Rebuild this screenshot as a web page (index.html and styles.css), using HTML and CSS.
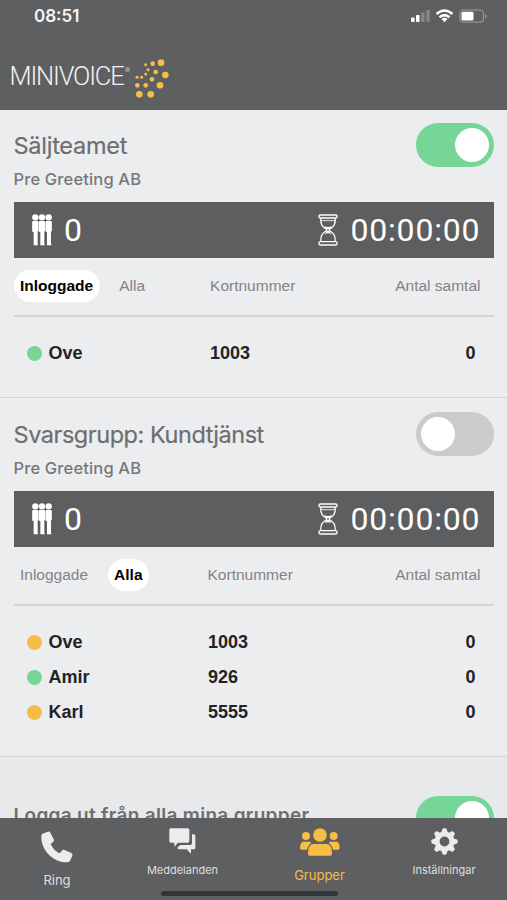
FILE: index.html
```html
<!DOCTYPE html>
<html lang="sv">
<head>
<meta charset="utf-8">
<title>Minivoice – Grupper</title>
<link rel="stylesheet" href="styles.css">
</head>
<body>
<svg width="0" height="0" class="defs">
  <symbol id="people" viewBox="0 0 60 96">
    <g id="person"><circle cx="10" cy="10" r="9.500"/><path d="M3 21H17Q19.500 21 19.500 24V52H17V90L19 94H5V54H3Q.5 54 .5 51V24Q.5 21 3 21Z"/></g>
    <use href="#person" x="20"/>
    <use href="#person" x="40"/>
  </symbol>
  <symbol id="glass" viewBox="0 0 60 96">
    <g fill="none" stroke="#fff" stroke-width="4">
      <rect x="3" y="3" width="54" height="9" rx="4"/><rect x="3" y="83" width="54" height="10" rx="4"/>
      <path d="M8 13C8 33 13 38 24 45Q28 48 24 51C13 58 8 64 8 82M52 13C52 33 47 38 36 45Q32 48 36 51C47 58 52 64 52 82"/>
      <path d="M9 20H51" stroke-width="2.500"/>
    </g>
    <path d="M18 36Q30 42 42 36L35 46H25ZM26 50H34L40 60Q30 55 20 60Z" fill="#fff"/>
  </symbol>
</svg>
<div class="phone">
  <header class="header">
    <div class="status">
      <span class="clock">08:51</span>
      <svg class="indicators" viewBox="0 0 78 18" width="78" height="18">
        <g fill="#fff"><rect x="1" y="11.500" width="3.600" height="4.500" rx="1"/><rect x="6" y="9" width="3.600" height="7" rx="1"/></g>
        <g fill="#858688"><rect x="11.200" y="6.500" width="3.400" height="9.500" rx="1"/><rect x="16.300" y="4" width="3.400" height="12" rx="1"/></g>
        <g fill="none" stroke="#fff" stroke-width="2.500"><path d="M26.500 8Q34.500 1 42.500 8M29.500 11.300Q34.500 7 39.500 11.300"/></g>
        <path d="M31.500 13Q34.500 10.500 37.500 13L34.500 16.300Z" fill="#fff"/>
        <rect x="50" y="4.200" width="23.500" height="12" rx="3.500" fill="none" stroke="#929395" stroke-width="1.300"/>
        <rect x="51.500" y="5.800" width="12" height="8.800" rx="1.500" fill="#fff"/>
        <path d="M75 8Q78.500 10.200 75 12.500Z" fill="#929395"/>
      </svg>
    </div>
    <div class="brand">
      <span class="wordmark">MINIVOICE</span><i class="reg"></i>
      <svg class="dots" viewBox="400 170 120 130" width="40" height="43.330" fill="#f7bd45">
        <circle cx="438" cy="193" r="4.500"/><circle cx="459" cy="190" r="7"/><circle cx="484" cy="187" r="10"/>
        <circle cx="445" cy="208" r="4.500"/><circle cx="468" cy="215" r="7"/><circle cx="497" cy="224" r="10"/>
        <circle cx="438" cy="221" r="4.500"/><circle cx="412" cy="231" r="4.500"/><circle cx="426" cy="231" r="4.500"/>
        <circle cx="457" cy="237" r="7"/><circle cx="413" cy="255" r="7"/><circle cx="438" cy="255" r="7"/>
        <circle cx="481" cy="255" r="10"/><circle cx="419" cy="282" r="10"/><circle cx="453" cy="282" r="10"/>
      </svg>
    </div>
  </header>

  <main class="content">
    <section class="group">
      <div class="top">
        <div><h2 class="t1">Säljteamet</h2><p class="company">Pre Greeting AB</p></div>
        <span class="toggle on"></span>
      </div>
      <div class="bar">
        <svg class="people" width="20" height="32" fill="#fff"><use href="#people"/></svg><span class="count">0</span>
        <svg class="glass" width="20" height="32"><use href="#glass"/></svg><span class="time">00:00:00</span>
      </div>
      <div class="filters">
        <span class="pill active">Inloggade</span><span class="pill all">Alla</span>
        <span class="col">Kortnummer</span><span class="calls">Antal samtal</span>
      </div>
      <div class="rows">
        <div class="row"><i class="dot green"></i><b class="name">Ove</b><b class="num">1003</b><b>0</b></div>
      </div>
    </section>

    <section class="group second">
      <div class="top">
        <div><h2 class="t2">Svarsgrupp: Kundtjänst</h2><p class="company">Pre Greeting AB</p></div>
        <span class="toggle"></span>
      </div>
      <div class="bar">
        <svg class="people" width="20" height="32" fill="#fff"><use href="#people"/></svg><span class="count">0</span>
        <svg class="glass" width="20" height="32"><use href="#glass"/></svg><span class="time">00:00:00</span>
      </div>
      <div class="filters">
        <span class="pill">Inloggade</span><span class="pill all active">Alla</span>
        <span class="col">Kortnummer</span><span class="calls">Antal samtal</span>
      </div>
      <div class="rows">
        <div class="row"><i class="dot"></i><b class="name">Ove</b><b class="num">1003</b><b>0</b></div>
        <div class="row"><i class="dot green"></i><b class="name">Amir</b><b class="num">926</b><b>0</b></div>
        <div class="row"><i class="dot"></i><b class="name">Karl</b><b class="num">5555</b><b>0</b></div>
      </div>
    </section>

    <section class="logout">
      <span class="logout-text">Logga ut från alla mina grupper</span>
      <span class="toggle on"></span>
    </section>
  </main>

  <nav class="tabs">
    <div class="tab ring">
      <svg width="32" height="32" viewBox="0 0 96 96" fill="#ebecee"><path d="M5 8L20 2Q25 0 28 5L38 25Q40 29 37 32L29 39Q38 59 56 67L64 58Q67 55 71 57L91 66Q96 69 94 74L88 88Q86 94 79 94C36 94 1 59 1 17Q0 10 5 8Z"/></svg>
      <span>Ring</span>
    </div>
    <div class="tab messages">
      <svg width="27" height="26" viewBox="0 0 81 78" fill="#ebecee"><path d="M5 1H56Q61 1 61 6V39Q61 44 56 44H27L16 56V44H5Q1 44 1 39V6Q1 1 5 1Z"/><path d="M69 19H75Q79 19 79 24V60Q79 64 75 64H66V77L53 64H30Q26 64 26 60V58L34 51H64Q69 51 69 46Z"/></svg>
      <span>Meddelanden</span>
    </div>
    <div class="tab groups">
      <svg width="40" height="28" viewBox="0 0 120 84" fill="#f7bd45"><circle cx="60" cy="21" r="20.500"/><circle cx="18" cy="24" r="12"/><circle cx="101" cy="24" r="12"/><path d="M41 48H79C91 48 96 60 96 77Q96 83 90 83H30Q24 83 24 77C24 60 29 48 41 48Z"/><path d="M12 41H27Q32 41 34 45Q24 51 21 65H5Q0 65 0 60C0 49 4 41 12 41ZM108 41H92Q88 41 86 45Q96 51 99 65H114Q119 65 119 60C119 49 116 41 108 41Z"/></svg>
      <span>Grupper</span>
    </div>
    <div class="tab settings">
      <svg width="27" height="27" viewBox="-40 -40 80 80" fill="#ebecee"><circle r="22" fill="none" stroke="#ebecee" stroke-width="15"/><path id="tooth" d="M-10-25L-6-37Q-5-39-3-39H3Q5-39 6-37L10-25Z"/><use href="#tooth" transform="rotate(45)"/><use href="#tooth" transform="rotate(90)"/><use href="#tooth" transform="rotate(135)"/><use href="#tooth" transform="rotate(180)"/><use href="#tooth" transform="rotate(225)"/><use href="#tooth" transform="rotate(270)"/><use href="#tooth" transform="rotate(315)"/></svg>
      <span>Inställningar</span>
    </div>
    <i class="home"></i>
  </nav>
</div>
</body>
</html>
```
FILE: styles.css
```css
* { box-sizing: border-box; }
body { margin: 0; font-family: Inter, "Liberation Sans", sans-serif; color: #6d6e71; }
h2, p { margin: 0; font-weight: 400; }
i { display: block; flex: none; }
svg { display: block; flex: none; }
.defs { position: absolute; }
.phone { width: 507px; height: 900px; display: flex; flex-direction: column; overflow: hidden; background: #ecedef; }

.header { height: 110px; flex: none; background: #5e5f61; }
.status { height: 32px; display: flex; justify-content: space-between; padding: 6px 18px 0 34px; color: #f6f6f6; }
.clock { font-size: 17px; font-weight: 600; line-height: 21px; }
.indicators { margin-right: 1px; }
.brand { display: flex; padding-left: 9.500px; height: 78px; }
.wordmark { width: 115.500px; margin-top: 29px; font-family: Roboto, sans-serif; font-weight: 300; font-size: 25.500px; line-height: 30px; letter-spacing: -1.150px; color: #f2f2f2; white-space: nowrap; }
.reg { width: 5px; height: 5px; margin-top: 35px; border-radius: 50%; background: #929395; }
.dots { margin: 24.700px 0 0 3.300px; }

.content { height: 708px; flex: none; overflow: hidden; }
.group { height: 288px; padding: 12.500px 13.500px 0; border-bottom: 1px solid #d3d4d6; }
.group.second { height: 359px; padding-top: 13.500px; }
.top { display: flex; justify-content: space-between; height: 79px; }
h2 { font-size: 23.500px; font-weight: 400; line-height: 30px; margin-top: 8px; white-space: nowrap; -webkit-text-stroke: .2px currentColor; }
.t1 { letter-spacing: -.250px; }
.t2 { letter-spacing: -.450px; }
.company { font-size: 16.500px; font-weight: 500; line-height: 22px; margin-top: 7px; letter-spacing: .150px; color: #77787b; }
.toggle { flex: none; width: 78px; height: 44px; padding: 5px; border-radius: 22px; background: #cacbcb; }
.toggle::before { content: ""; display: block; width: 34px; height: 34px; border-radius: 50%; background: #fff; }
.toggle.on { background: #75d697; }
.toggle.on::before { margin-left: 34px; }
.bar { height: 56px; background: #5d5e60; color: #fff; display: flex; align-items: center; padding: 0 13px 0 18px; font-family: Roboto, sans-serif; font-weight: 400; font-size: 32px; line-height: 40px; }
.count { margin-left: 12.500px; padding-top: 1px; }
.glass { margin-left: auto; }
.time { width: 130px; margin-left: 12.500px; padding-top: 1px; letter-spacing: .800px; white-space: nowrap; }
.filters { height: 59px; border-bottom: 2px solid #d3d4d6; display: flex; align-items: flex-start; padding: 12px 13px 0 0; font-family: "Liberation Sans", sans-serif; font-size: 15.500px; line-height: 32px; color: #828385; white-space: nowrap; }
.pill { height: 32px; border-radius: 16px; padding: 0 6.500px; }
.pill.all { margin-left: 13px; }
.active { background: #fff; color: #000; font-weight: 700; }
.col { margin-left: 58.500px; }
.calls { margin-left: auto; }
.rows { padding: 19px 18px 0 13px; font-family: "Liberation Sans", sans-serif; font-size: 18px; color: #222326; }
.row { height: 35px; display: flex; align-items: center; line-height: 35px; }
.dot { width: 15px; height: 15px; border-radius: 50%; background: #f5bd45; margin-right: 7px; }
.dot.green { background: #75d697; }
.name { width: 161.500px; }
.second .name { width: 159.500px; }
.num { flex: 1; }
.logout { display: flex; justify-content: space-between; padding: 39px 13.500px 0; height: 100px; background: #e8e9eb; }
.logout-text { font-size: 19px; line-height: 24px; font-weight: 600; letter-spacing: .300px; margin-top: 8px; white-space: nowrap; }

.tabs { position: relative; height: 82px; flex: none; display: grid; grid-template-columns: 114px 137px 137px 112px; background: #5e5f61; color: #dedfe0; }
.tab { display: flex; flex-direction: column; align-items: center; font-size: 11px; line-height: 16px; white-space: nowrap; }
.ring { padding-top: 13px; font-size: 13px; }
.ring span { margin-top: 9px; }
.messages { padding-top: 10px; }
.messages span { margin-top: 8px; }
.groups { padding-top: 10px; font-size: 13px; color: #f7bd45; }
.groups span { margin-top: 11px; }
.settings { padding-top: 10px; }
.settings span { margin-top: 7px; }
.home { position: absolute; left: 161px; bottom: 4px; width: 177px; height: 5px; border-radius: 3px; background: #333436; }
```
